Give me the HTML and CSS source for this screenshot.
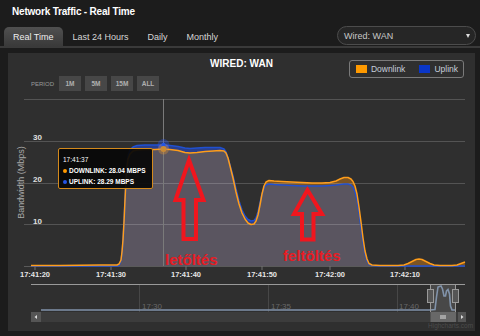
FILE: index.html
```html
<!DOCTYPE html>
<html>

<head>
    <meta charset="utf-8">
    <title>Network Traffic - Real Time</title>
    <link rel="stylesheet" href="styles.css">
</head>

<body>
    <h1 class="page-title">Network Traffic - Real Time</h1>

    <div class="toolbar">
        <ul class="tabs">
            <li class="tab active">Real Time</li>
            <li class="tab">Last 24 Hours</li>
            <li class="tab">Daily</li>
            <li class="tab">Monthly</li>
        </ul>
        <div class="select">Wired: WAN<span class="caret"></span></div>
    </div>

    <div class="chart">
        <div class="chart-head">
            <div class="period">
                <span class="period-label">PERIOD</span>
                <span class="period-btn">1M</span>
                <span class="period-btn">5M</span>
                <span class="period-btn">15M</span>
                <span class="period-btn">ALL</span>
            </div>
            <div class="chart-title">WIRED: WAN</div>
            <div class="legend">
                <span class="legend-item"><i class="swatch down"></i>Downlink</span>
                <span class="legend-item"><i class="swatch up"></i>Uplink</span>
            </div>
        </div>

        <svg class="plot" width="467" height="239" viewBox="8 92 467 239">
            <!-- series fills -->
            <polygon class="fill-up" points="31,266 31,266 117,266 119,265.5 121,261 122,253 123,241 124,222 125,200 126,180 127,165 128,156 130,150 133,147 137,145.5 145,145 155,145 163,145 170,145.5 178,146.5 185,148 190,148.5 197,148 205,147.5 213,147.5 220,147.5 224,149 226,152 228,158 230,165 233,176 236,189 239,201 242,210 245,216 248,219.5 251,221 254,220.5 256,218 258,212 260,203 262,194 264,188 266,185 269,184 274,184.5 282,185 292,185.5 302,186 312,186 322,186 330,185.5 336,185 340,184.5 344,184 348,184 351,185 353,187 355,192 357,200 359,213 361,228 363,243 365,254 367,261 369,264.5 372,265.5 380,266 465,266" />
            <polygon class="fill-down" points="31,266 31,265.5 60,265.5 100,265 117,265 119,264 121,260 122,252 123,240 124,222 125,200 126,180 127,167 128,159 130,154 133,151 137,150 145,149.5 155,149.5 163,149 170,149.5 178,150.5 185,152.5 190,153 197,152.5 205,151.5 213,151 220,150.5 224,151 226,153 228,158 230,166 233,178 236,192 239,204 242,213 245,219 248,223 251,224.5 254,224 256,221 258,215 260,205 262,194 264,186 266,182 269,180.5 274,181 282,181.5 292,182 302,182.5 312,183 322,183 330,182.5 336,181 340,179 344,177.5 348,177.5 351,179 353,181.5 355,186 357,194 359,207 361,222 363,238 365,251 367,259 369,263.5 372,265 380,265.5 398,265.5 404,265 408,263.5 412,261.5 416,259.5 419,259 422,259.5 426,261.5 430,263.5 434,265 440,265.5 452,265.5 457,265 461,263.5 465,262 465,266" />
            <polygon class="fill-area" points="31,266 31,265.5 60,265.5 100,265 117,265 119,264 121,260 122,252 123,240 124,222 125,200 126,180 127,167 128,159 130,154 133,151 137,150 145,149.5 155,149.5 163,149 170,149.5 178,150.5 185,152.5 190,153 197,152.5 205,151.5 213,151 220,150.5 224,151 226,153 228,158 230,166 233,178 236,192 239,204 242,213 245,219 248,223 251,224.5 254,224 256,221 258,215 260,205 262,194 264,188 266,185 269,184 274,184.5 282,185 292,185.5 302,186 312,186 322,186 330,185.5 336,185 340,184.5 344,184 348,184 351,185 353,187 355,192 357,200 359,213 361,228 363,243 365,254 367,261 369,264.5 372,265.5 380,266 465,266" />

            <!-- grid -->
            <line class="grid" x1="24" y1="99.5" x2="465" y2="99.5" />
            <line class="grid" x1="24" y1="141.5" x2="465" y2="141.5" />
            <line class="grid" x1="24" y1="183.5" x2="465" y2="183.5" />
            <line class="grid" x1="24" y1="224.5" x2="465" y2="224.5" />
            <line class="axis" x1="24" y1="266.5" x2="465" y2="266.5" />
            <line class="cross" x1="163.5" y1="99" x2="163.5" y2="266" />

            <text class="ylab" x="33" y="140">30</text>
            <text class="ylab" x="33" y="182">20</text>
            <text class="ylab" x="33" y="223.5">10</text>
            <text class="ytitle" transform="translate(24 182.5) rotate(-90)">Bandwidth (Mbps)</text>

            <line class="tick" x1="35" y1="266" x2="35" y2="270" />
            <line class="tick" x1="111" y1="266" x2="111" y2="270" />
            <line class="tick" x1="186" y1="266" x2="186" y2="270" />
            <line class="tick" x1="262" y1="266" x2="262" y2="270" />
            <line class="tick" x1="330" y1="266" x2="330" y2="270" />
            <line class="tick" x1="405" y1="266" x2="405" y2="270" />
            <text class="xlab" x="35" y="277">17:41:20</text>
            <text class="xlab" x="111" y="277">17:41:30</text>
            <text class="xlab" x="186" y="277">17:41:40</text>
            <text class="xlab" x="262" y="277">17:41:50</text>
            <text class="xlab" x="330" y="277">17:42:00</text>
            <text class="xlab" x="405" y="277">17:42:10</text>

            <!-- series lines -->
            <polyline class="line-up" points="31,266 117,266 119,265.5 121,261 122,253 123,241 124,222 125,200 126,180 127,165 128,156 130,150 133,147 137,145.5 145,145 155,145 163,145 170,145.5 178,146.5 185,148 190,148.5 197,148 205,147.5 213,147.5 220,147.5 224,149 226,152 228,158 230,165 233,176 236,189 239,201 242,210 245,216 248,219.5 251,221 254,220.5 256,218 258,212 260,203 262,194 264,188 266,185 269,184 274,184.5 282,185 292,185.5 302,186 312,186 322,186 330,185.5 336,185 340,184.5 344,184 348,184 351,185 353,187 355,192 357,200 359,213 361,228 363,243 365,254 367,261 369,264.5 372,265.5 380,266 465,266" />
            <polyline class="line-down" points="31,265.5 60,265.5 100,265 117,265 119,264 121,260 122,252 123,240 124,222 125,200 126,180 127,167 128,159 130,154 133,151 137,150 145,149.5 155,149.5 163,149 170,149.5 178,150.5 185,152.5 190,153 197,152.5 205,151.5 213,151 220,150.5 224,151 226,153 228,158 230,166 233,178 236,192 239,204 242,213 245,219 248,223 251,224.5 254,224 256,221 258,215 260,205 262,194 264,186 266,182 269,180.5 274,181 282,181.5 292,182 302,182.5 312,183 322,183 330,182.5 336,181 340,179 344,177.5 348,177.5 351,179 353,181.5 355,186 357,194 359,207 361,222 363,238 365,251 367,259 369,263.5 372,265 380,265.5 398,265.5 404,265 408,263.5 412,261.5 416,259.5 419,259 422,259.5 426,261.5 430,263.5 434,265 440,265.5 452,265.5 457,265 461,263.5 465,262" />

            <!-- hover markers -->
            <circle class="halo-up" cx="163.5" cy="145" r="6" />
            <circle class="halo-down" cx="163.5" cy="149" r="5.5" />
            <circle class="dot-up" cx="163.5" cy="145" r="2.2" />
            <circle class="dot-down" cx="163.5" cy="149" r="3" />

            <!-- annotations -->
            <polygon class="arrow" points="189,160 203.5,200 196,200 196,239 183.5,239 183.5,200 175.5,200" />
            <polygon class="arrow" points="307.5,190 322,214 313.5,214 313.5,239.5 302,239.5 302,214 294,214" />
            <text class="note" x="165" y="265">letőltés</text>
            <text class="note" x="283" y="261">feltöltés</text>

            <!-- navigator -->
            <line class="nav-grid" x1="139.5" y1="285" x2="139.5" y2="312" />
            <line class="nav-grid" x1="268.5" y1="285" x2="268.5" y2="312" />
            <line class="nav-grid" x1="397.5" y1="285" x2="397.5" y2="312" />
            <text class="nav-lab" x="142" y="309">17:30</text>
            <text class="nav-lab" x="271" y="309">17:35</text>
            <text class="nav-lab" x="399" y="309">17:40</text>
            <rect class="nav-window" x="430.5" y="285" width="25" height="27" />
            <polyline class="nav-series" points="41,310 430,310 435,309.5 436.5,297 438,287 441,286 442.5,289 444,296 445.5,296 446.5,291 448,289.5 449.5,294 450.5,306 452,310 455,310" />
            <line class="nav-line" x1="31" y1="284.5" x2="465" y2="284.5" />
            <line class="nav-edge" x1="430.5" y1="285" x2="430.5" y2="312" />
            <line class="nav-edge" x1="455.5" y1="285" x2="455.5" y2="312" />
            <rect class="handle" x="427.5" y="289.5" width="6" height="13" />
            <rect class="handle" x="452.5" y="289.5" width="6" height="13" />

            <rect class="scroll-track" x="31" y="312" width="435" height="10" />
            <rect class="scroll-btn" x="31" y="312" width="10" height="10" />
            <polygon class="scroll-arrow" points="37,315 37,319 34.5,317" />
            <rect class="scroll-btn" x="458" y="312" width="8" height="10" />
            <polygon class="scroll-arrow" points="461,315 461,319 463.5,317" />
            <rect class="scroll-thumb" x="430.5" y="312" width="25.5" height="10" />
            <line class="grip" x1="441" y1="315" x2="441" y2="319" />
            <line class="grip" x1="443" y1="315" x2="443" y2="319" />
            <line class="grip" x1="445" y1="315" x2="445" y2="319" />

            <text class="credit" x="428" y="327.5">Highcharts.com</text>
        </svg>

        <div class="tooltip">
            <div>17:41:37</div>
            <div class="tip-row"><i class="tip-dot down"></i>DOWNLINK: 28.04 MBPS</div>
            <div class="tip-row"><i class="tip-dot up"></i>UPLINK: 28.29 MBPS</div>
        </div>
    </div>
</body>

</html>
```

FILE: styles.css
```css
* {
    box-sizing: border-box;
}

body {
    margin: 0;
    background-color: #1c1c1c;
    font-family: "Liberation Sans", Arial, sans-serif;
    color: #dddddd;
}

.page-title {
    margin: 0;
    padding: 6px 0 0 12px;
    font-size: 10px;
    line-height: 12px;
    font-weight: bold;
    letter-spacing: -0.2px;
    color: #ffffff;
}

.toolbar {
    display: flex;
    justify-content: space-between;
    align-items: flex-end;
    height: 22px;
    margin-top: 8px;
    padding: 0 4px;
    border-bottom: 2px solid #3a3a3a;
}

.tabs {
    display: flex;
    margin: 0;
    padding: 0;
    list-style: none;
}

.tab {
    height: 19px;
    margin-right: 1px;
    padding: 2px 9px 0;
    font-size: 9px;
    line-height: 17px;
    color: #d6d6d6;
}

.tab.active {
    background: linear-gradient(#505050, #3a3a3a);
    border-radius: 5px 5px 0 0;
    color: #eeeeee;
}

.select {
    align-self: flex-start;
    display: flex;
    align-items: center;
    justify-content: space-between;
    width: 139px;
    height: 19px;
    padding: 0 5px 0 6px;
    background-color: #262626;
    border: 1px solid #4c4c4c;
    border-radius: 10px;
    font-size: 9px;
    color: #c8c8c8;
}

.caret {
    width: 0;
    height: 0;
    border-left: 2.5px solid transparent;
    border-right: 2.5px solid transparent;
    border-top: 4px solid #dddddd;
}

.chart {
    position: relative;
    width: 467px;
    height: 278px;
    margin: 5px 0 0 8px;
    background-color: #2f2f2f;
}

.chart-head {
    display: grid;
    grid-template-columns: 1fr auto 1fr;
    height: 39px;
}

.period {
    display: flex;
    align-items: center;
    gap: 4px;
    align-self: end;
    margin-bottom: 1px;
    padding-left: 23px;
}

.period-label {
    margin-right: 1px;
    font-size: 6px;
    color: #9a9a9a;
}

.period-btn {
    display: flex;
    align-items: center;
    justify-content: center;
    width: 22px;
    height: 15px;
    background-color: #474747;
    font-size: 6.5px;
    font-weight: bold;
    color: #b0b0b0;
}

.chart-title {
    margin-top: 5px;
    font-size: 10px;
    line-height: 12px;
    font-weight: bold;
    color: #ffffff;
}

.legend {
    justify-self: end;
    align-self: start;
    display: flex;
    align-items: center;
    height: 18px;
    margin: 7px 11px 0 0;
    padding: 0 5px 0 6px;
    border: 1px solid #7a7a7a;
    border-radius: 3px;
    font-size: 8.5px;
    color: #c6cedc;
}

.legend-item {
    display: flex;
    align-items: center;
}

.legend-item + .legend-item {
    margin-left: 14px;
}

.swatch {
    width: 11px;
    height: 8px;
    margin-right: 4px;
}

.swatch.down {
    background-color: #ff9a00;
}

.swatch.up {
    background-color: #0a36c8;
}

.plot {
    display: block;
}

/* chart svg parts */
.fill-up {
    fill: #2a3f8c;
}

.fill-down {
    fill: #7b5424;
}

.fill-area {
    fill: #5a5560;
}

.grid {
    stroke: rgba(255, 255, 255, 0.18);
    stroke-width: 1;
}

.axis {
    stroke: #5a5a5a;
    stroke-width: 1;
}

.cross {
    stroke: #7a7a7a;
    stroke-width: 1;
}

.tick {
    stroke: #707070;
    stroke-width: 1;
}

.ylab {
    font-size: 8px;
    font-weight: bold;
    fill: #e0e0e0;
}

.ytitle {
    font-size: 9px;
    fill: #a8a8a8;
    text-anchor: middle;
}

.xlab {
    font-size: 7.5px;
    font-weight: bold;
    fill: #e4e4e4;
    text-anchor: middle;
}

.line-down {
    fill: none;
    stroke: #ff9d1a;
    stroke-width: 1.5;
    stroke-linejoin: round;
}

.line-up {
    fill: none;
    stroke: #2050d0;
    stroke-width: 1.5;
    stroke-linejoin: round;
}

.halo-up {
    fill: rgba(40, 90, 255, 0.35);
}

.halo-down {
    fill: rgba(255, 160, 40, 0.3);
}

.dot-up {
    fill: #2455e6;
}

.dot-down {
    fill: #c98a36;
}

.arrow {
    fill: none;
    stroke: #f0161e;
    stroke-width: 4;
}

.note {
    font-size: 15px;
    font-weight: bold;
    fill: #e81c24;
}

.nav-line {
    stroke: #9a9a9a;
    stroke-width: 1;
}

.nav-grid {
    stroke: #474747;
    stroke-width: 1;
}

.nav-lab {
    font-size: 8px;
    fill: #686868;
}

.nav-window {
    fill: rgba(255, 255, 255, 0.12);
}

.nav-edge {
    stroke: #9a9a9a;
    stroke-width: 1;
}

.nav-series {
    fill: none;
    stroke: #8193aa;
    stroke-width: 1.6;
}

.handle {
    fill: #555555;
    stroke: #9a9a9a;
    stroke-width: 1;
}

.scroll-track {
    fill: #3c3c3c;
}

.scroll-btn {
    fill: #555555;
}

.scroll-arrow {
    fill: #dddddd;
}

.scroll-thumb {
    fill: #686868;
}

.grip {
    stroke: #e0e0e0;
    stroke-width: 1;
}

.credit {
    font-size: 6.5px;
    fill: #4c4c4c;
}

.tooltip {
    position: absolute;
    left: 50px;
    top: 95px;
    width: 95px;
    height: 41px;
    padding: 5px 0 0 4px;
    background-color: rgba(8, 8, 8, 0.93);
    border: 1px solid #d48a1c;
    border-radius: 2px;
    font-size: 6.5px;
    line-height: 11px;
    color: #ffffff;
}

.tip-row {
    font-weight: bold;
}

.tip-dot {
    display: inline-block;
    width: 4px;
    height: 4px;
    margin-right: 2px;
    border-radius: 50%;
    vertical-align: 0;
}

.tip-dot.down {
    background-color: #ff9a00;
}

.tip-dot.up {
    background-color: #2455e6;
}
```
